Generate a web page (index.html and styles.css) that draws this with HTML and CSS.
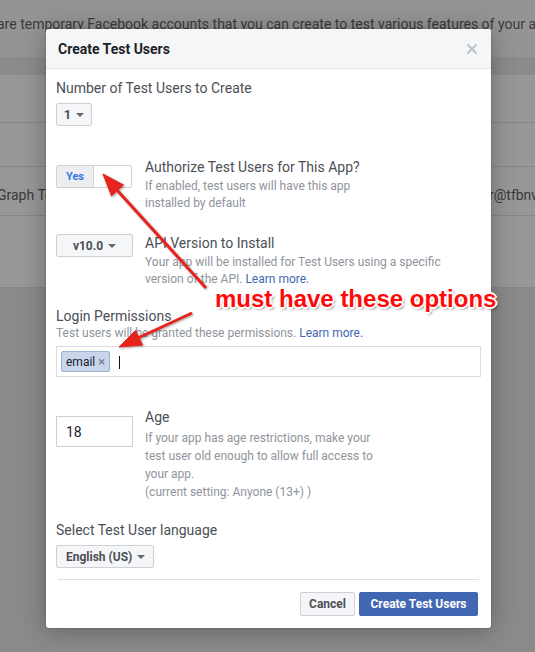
FILE: index.html
```html
<!DOCTYPE html>
<html>
<head>
<meta charset="utf-8">
<title>Create Test Users</title>
<link rel="stylesheet" href="styles.css">
</head>
<body>
<div class="page">
  <p class="intro">are temporary Facebook accounts that you can create to test various features of your app.</p>
  <div class="table">
    <div class="thead"></div>
    <div class="row r1"></div>
    <div class="row r2"></div>
    <div class="row r3"><span class="cell-left">Graph Test User</span><span class="cell-right">r@tfbnw.net</span></div>
    <div class="row r4"></div>
  </div>
</div>

<div class="modal">
  <div class="modal-head">
    <h2>Create Test Users</h2>
    <svg class="close" width="10" height="10" viewBox="0 0 10 10"><path d="M1 1L9 9M9 1L1 9" stroke="#bec2c9" stroke-width="2" stroke-linecap="square"/></svg>
  </div>
  <div class="modal-body">
    <div class="field">
      <div class="lbl">Number of Test Users to Create</div>
      <div class="select sel-num">1<i class="caret"></i></div>
    </div>

    <div class="opt opt-auth">
      <div class="ctrl">
        <div class="toggle"><span class="on">Yes</span><span class="off"></span></div>
      </div>
      <div class="txt">
        <div class="lbl">Authorize Test Users for This App?</div>
        <div class="desc narrow">If enabled, test users will have this app installed by default</div>
      </div>
    </div>

    <div class="opt opt-api">
      <div class="ctrl">
        <div class="select sel-api">v10.0<i class="caret"></i></div>
      </div>
      <div class="txt">
        <div class="lbl">API Version to Install</div>
        <div class="desc wide">Your app will be installed for Test Users using a specific version of the API. <span class="link">Learn more.</span></div>
      </div>
    </div>

    <div class="field perm">
      <div class="lbl">Login Permissions</div>
      <div class="desc">Test users will be granted these permissions. <span class="link">Learn more.</span></div>
      <div class="tokens">
        <span class="token">email<span class="x">×</span></span>
        <span class="cursor"></span>
      </div>
    </div>

    <div class="opt opt-age">
      <div class="ctrl">
        <div class="num">18</div>
      </div>
      <div class="txt">
        <div class="lbl">Age</div>
        <div class="desc age-desc narrow">If your app has age restrictions, make your test user old enough to allow full access to your app.<br>(current setting: Anyone (13+) )</div>
      </div>
    </div>

    <div class="field lang">
      <div class="lbl">Select Test User language</div>
      <div class="select sel-lang">English (US)<i class="caret"></i></div>
    </div>
  </div>
  <div class="modal-foot">
    <button class="btn btn-cancel">Cancel</button>
    <button class="btn btn-primary">Create Test Users</button>
  </div>
</div>

<div class="annot">
  <svg class="arrows" width="535" height="652" viewBox="0 0 535 652">
    <g fill="#e8231d" stroke="#e8231d">
      <line x1="206" y1="288" x2="116" y2="189" stroke-width="3"/>
      <polygon points="103,174 123.5,185 111.5,196" stroke-width="1" stroke-linejoin="round"/>
      <line x1="192" y1="313" x2="137" y2="338.5" stroke-width="3"/>
      <polygon points="119,347 135.5,330.5 142.5,345" stroke-width="1" stroke-linejoin="round"/>
    </g>
  </svg>
  <div class="note">must have these options</div>
</div>
</body>
</html>
```

FILE: styles.css
```css
* { box-sizing: border-box; }
html, body { margin: 0; padding: 0; }
body {
  width: 535px;
  height: 652px;
  overflow: hidden;
  position: relative;
  background: #8a8a8a;
  font-family: Roboto, "Liberation Sans", sans-serif;
}

/* dimmed page behind the dialog */
.page { height: 652px; }
.intro {
  margin: 0;
  height: 57px;
  padding-top: 15px;
  background: #949494;
  color: #3a3a3a;
  font-size: 14px;
  line-height: 18px;
  white-space: nowrap;
  text-indent: -3px;
  overflow: hidden;
}
.thead { height: 18px; background: #8b8b8b; }
.row { background: #979797; border-top: 1px solid #868686; }
.r1 { height: 47px; border-top: 0; }
.r2 { height: 44px; }
.r3 {
  height: 49px;
  padding-top: 19px;
  display: grid;
  grid-template-columns: 489px auto;
  color: #3a3a3a;
  font-size: 14px;
  line-height: 18px;
  white-space: nowrap;
}
.cell-left { margin-left: -3px; }
.r4 { height: 73px; border-bottom: 1px solid #868686; }

/* dialog */
.modal {
  position: absolute;
  left: 46px;
  top: 29px;
  width: 445px;
  background: #fff;
  border-radius: 3px;
  overflow: hidden;
  box-shadow: 0 2px 24px rgba(0, 0, 0, 0.3), 0 0 0 1px rgba(0, 0, 0, 0.08);
}
.modal-head {
  height: 40px;
  background: #f5f6f7;
  border-bottom: 1px solid #e5e5e5;
  display: flex;
  align-items: center;
  justify-content: space-between;
  padding: 0 14px 0 12px;
}
.modal-head h2 {
  margin: 0;
  font-size: 14px;
  line-height: 18px;
  font-weight: bold;
  color: #1d2129;
}
.close { display: block; }

.modal-body { padding: 10px 10px 0; }
.lbl {
  font-size: 14px;
  line-height: 18px;
  color: #4b4f56;
}
.desc {
  font-size: 12px;
  line-height: 17px;
  color: #90949c;
}
.narrow { max-width: 240px; }
.wide { max-width: 305px; }
.link { color: #4267b2; }

.select {
  display: inline-flex;
  align-items: center;
  justify-content: center;
  gap: 5px;
  height: 23px;
  padding: 0 8px;
  background: #f5f6f7;
  border: 1px solid #ced0d4;
  border-radius: 2px;
  font-size: 12px;
  font-weight: bold;
  color: #4b4f56;
  white-space: nowrap;
}
.caret {
  display: block;
  flex: none;
  width: 0;
  height: 0;
  border-left: 4px solid transparent;
  border-right: 4px solid transparent;
  border-top: 4px solid #606770;
  margin-top: 1px;
}
.sel-num { width: 36px; margin-top: 6px; font-size: 13px; }
.sel-api { width: 77px; }

.opt { display: flex; gap: 12px; }
.ctrl { width: 77px; flex: none; }
.opt-auth { margin-top: 32px; }
.opt-auth .desc { margin-top: 2px; }
.toggle {
  display: flex;
  width: 76px;
  height: 23px;
  margin-top: 7px;
  border: 1px solid #ced0d4;
  border-radius: 2px;
  overflow: hidden;
}
.toggle .on {
  width: 37px;
  display: flex;
  align-items: center;
  justify-content: center;
  background: #ebedf0;
  border-right: 1px solid #ced0d4;
  color: #3578e5;
  font-size: 11px;
  font-weight: bold;
}
.toggle .off { flex: 1; background: #fff; }

.opt-api { margin-top: 22px; }
.opt-api .desc { margin-top: 2px; }

.perm { margin-top: 19px; }
.tokens {
  margin-top: 4px;
  height: 31px;
  border: 1px solid #dadde1;
  display: flex;
  align-items: center;
  padding: 0 4px;
  gap: 9px;
}
.token {
  display: inline-flex;
  align-items: center;
  gap: 3px;
  height: 21px;
  padding: 0 4px 0 4px;
  background: #c9d5ea;
  border: 1px solid #9cb3d8;
  border-radius: 2px;
  font-size: 12px;
  color: #1d2129;
}
.token .x { color: #7f8791; font-size: 13px; font-weight: bold; }
.cursor { width: 1px; height: 13px; background: #111; margin-top: 2px; }

.opt-age { margin-top: 31px; }
.num {
  margin-top: 8px;
  width: 77px;
  height: 31px;
  border: 1px solid #ccd0d5;
  display: flex;
  align-items: center;
  padding-left: 9px;
  font-size: 14px;
  color: #1d2129;
}
.age-desc { margin-top: 3px; line-height: 18px; }

.lang { margin-top: 20px; }
.sel-lang { margin-top: 6px; padding: 0 8px 0 9px; }

.modal-foot {
  margin: 11px 12px 0;
  border-top: 1px solid #dddfe2;
  padding: 12px 1px 12px 0;
  display: flex;
  justify-content: flex-end;
  gap: 4px;
}
.btn {
  height: 24px;
  padding: 0 8px;
  border-radius: 2px;
  font-family: Roboto, "Liberation Sans", sans-serif;
  font-size: 12px;
  font-weight: bold;
  line-height: 22px;
}
.btn-cancel {
  width: 55px;
  background: #f5f6f7;
  border: 1px solid #ced0d4;
  color: #4b4f56;
}
.btn-primary {
  width: 119px;
  background: #4267b2;
  border: 1px solid #4267b2;
  color: #fff;
}

/* annotation overlay */
.arrows {
  position: absolute;
  left: 0;
  top: 0;
  pointer-events: none;
  filter: drop-shadow(1px 1px 1px rgba(0, 0, 0, 0.35));
}
.note {
  position: absolute;
  left: 215px;
  top: 285px;
  font-family: "Liberation Sans", Arial, sans-serif;
  font-size: 24px;
  line-height: 28px;
  font-weight: bold;
  color: #ff0a0a;
  white-space: nowrap;
  text-shadow:
    -1px -1px 0 #fff, 1px -1px 0 #fff, -1px 1px 0 #fff, 1px 1px 0 #fff,
    0 -2px 0 #fff, 0 2px 0 #fff, -2px 0 0 #fff, 2px 0 0 #fff,
    2px 2px 3px rgba(0, 0, 0, 0.55);
}
```
